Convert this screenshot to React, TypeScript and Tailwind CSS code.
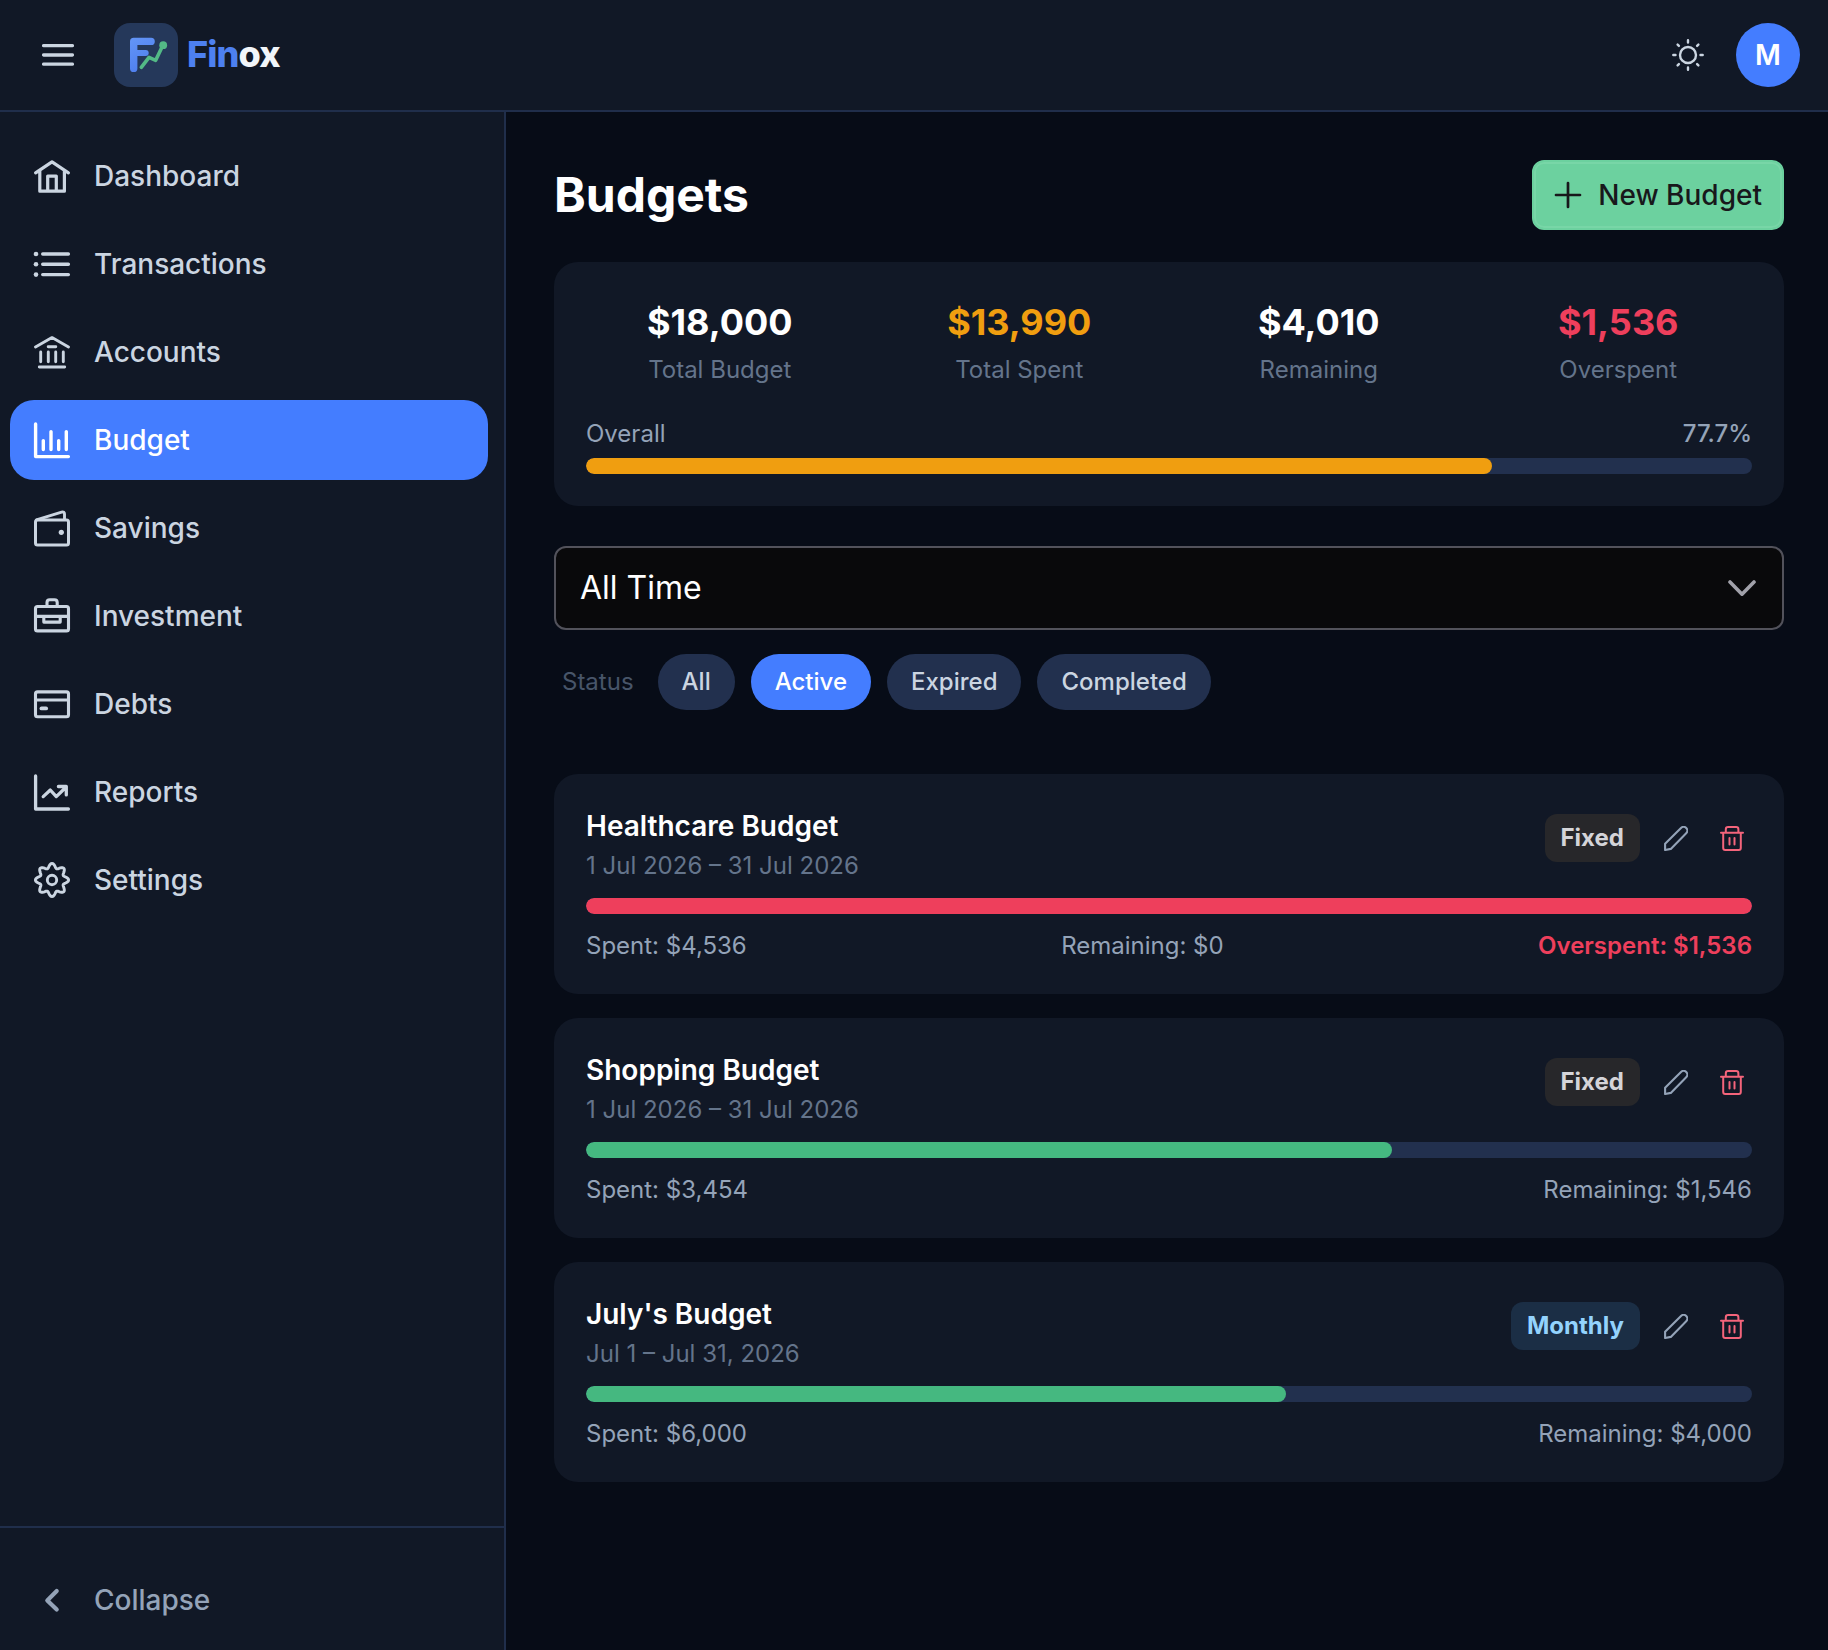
import { useState } from 'react';
import type { ReactNode } from 'react';
import clsx from 'clsx';

type Budget = {
  name: string;
  period: string;
  kind: 'Fixed' | 'Monthly';
  spent: number;
  limit: number;
};

const budgets: Budget[] = [
  { name: 'Healthcare Budget', period: '1 Jul 2026 – 31 Jul 2026', kind: 'Fixed', spent: 4536, limit: 3000 },
  { name: 'Shopping Budget', period: '1 Jul 2026 – 31 Jul 2026', kind: 'Fixed', spent: 3454, limit: 5000 },
  { name: "July's Budget", period: 'Jul 1 – Jul 31, 2026', kind: 'Monthly', spent: 6000, limit: 10000 },
];

const statuses = ['All', 'Active', 'Expired', 'Completed'];

const money = (n: number) => `$${n.toLocaleString('en-US')}`;

// ---------- Icons ----------

// Eight rounded teeth around the centre of a 36px box
const gearPath = 'M' + Array.from({ length: 144 }, (_, i) => {
  const a = (i / 144) * Math.PI * 2;
  const r = 14.35 + 2.25 * Math.cos(8 * a);
  return `${(18 + r * Math.cos(a)).toFixed(2)} ${(18 + r * Math.sin(a)).toFixed(2)}`;
}).join('L') + 'Z';

function NavIcon({ children }: { children: ReactNode }) {
  return (
    <svg viewBox="0 0 36 36" className="size-9 shrink-0 overflow-visible" fill="none" stroke="currentColor"
      strokeWidth={3.2} strokeLinecap="round" strokeLinejoin="round">
      {children}
    </svg>
  );
}

const navItems: { label: string; icon: ReactNode }[] = [
  {
    label: 'Dashboard',
    icon: <path d="M1.6 14.8 18 3.8l16.4 11M5.8 12.4v20.8h24.6V12.4M13.7 33.2V18.1h8.6v15.1" />,
  },
  {
    label: 'Transactions',
    icon: (
      <>
        <path d="M8.7 8h25.7M8.7 18.3h25.7M8.7 28.6h25.7" strokeWidth={3.4} />
        <g fill="currentColor" stroke="none">
          <circle cx="2" cy="8" r="2.3" />
          <circle cx="2" cy="18.3" r="2.3" />
          <circle cx="2" cy="28.6" r="2.3" />
        </g>
      </>
    ),
  },
  {
    label: 'Accounts',
    icon: <path strokeWidth={2.9} d="M1.5 13 18 3.6 34.5 13M14.2 12.7h7.6M6.7 18v9.8M14.3 18v9.8M21.7 18v9.8M29.3 18v9.8M5.3 33h25.4" />,
  },
  {
    label: 'Budget',
    icon: <path strokeWidth={3.4} d="M1.6 2v32.6h32.8M9.3 18.6v9M17 9.6v18M24.7 18.6v9M32.3 9.6v18" />,
  },
  {
    label: 'Savings',
    icon: (
      <>
        <rect x="1.5" y="9.9" width="33" height="25.2" rx="2" strokeWidth={3} />
        <path strokeWidth={2.9} d="M2.4 9.8 27.6 2.1q2.9-.7 2.9 2v5.4" />
        <circle cx="27.3" cy="22.3" r="2.6" fill="currentColor" stroke="none" />
      </>
    ),
  },
  {
    label: 'Investment',
    icon: (
      <>
        <rect x="1.5" y="8.5" width="33" height="24.4" rx="2" strokeWidth={3.1} />
        <path strokeWidth={3.1} d="M13 8.5V4.6q0-2.8 2.8-2.8h4.6q2.8 0 2.8 2.8v3.9M1.5 18.4h33M9.8 18.4v5.7h16.4v-5.7" />
      </>
    ),
  },
  {
    label: 'Debts',
    icon: (
      <>
        <rect x="1.5" y="5.9" width="33" height="24.9" rx="2" strokeWidth={3.1} />
        <path strokeWidth={3.1} d="M1.5 14h33" />
        <path strokeWidth={3.9} d="M7.5 22.4h4.6" />
      </>
    ),
  },
  {
    label: 'Reports',
    icon: <path strokeWidth={3.3} d="M1.6 2v33h32.8M9.2 22.6l7.1-6.6 6 6.6 9.9-9.6M24.4 12.5h7.9v8.4" />,
  },
  {
    label: 'Settings',
    icon: (
      <>
        <path strokeWidth={2.9} d={gearPath} />
        <circle cx="18" cy="18" r="4.7" strokeWidth={2.9} />
      </>
    ),
  },
];

function LogoMark() {
  return (
    <div className="size-16 rounded-2xl bg-[#25385a]">
      <svg viewBox="0 0 64 64" className="size-16" fill="none" strokeLinecap="round" strokeLinejoin="round">
        <defs>
          <linearGradient id="mark" gradientUnits="userSpaceOnUse" x1="16" y1="14" x2="36" y2="50">
            <stop offset="0" stopColor="#6496f6" />
            <stop offset="1" stopColor="#4b7bee" />
          </linearGradient>
        </defs>
        <path d="M19.7 45.4V18.4H37.1" stroke="url(#mark)" strokeWidth={7.4} />
        <path d="M20 30.1h11.7" stroke="url(#mark)" strokeWidth={6} />
        <path d="M27.3 44.3 35 34.3l6.7 3L49 22" stroke="#53b986" strokeWidth={3.6} />
        <circle cx="49.2" cy="22.2" r="3.9" fill="#53b986" />
      </svg>
    </div>
  );
}

function PencilIcon() {
  return (
    <svg viewBox="0 0 24 25" className="h-[25px] w-6" fill="none" stroke="currentColor" strokeWidth={2.1} strokeLinejoin="round">
      <path d="M1.1 24v-6.2L17 1.9a3.7 3.7 0 0 1 5.2 5.3L6.8 22.9Z" />
    </svg>
  );
}

function TrashIcon() {
  return (
    <svg viewBox="0 0 24 25" className="h-[25px] w-6" fill="none" stroke="currentColor" strokeWidth={2} strokeLinecap="round">
      <path d="M1 6.7h22M5.8 6.7V3.4q0-2.3 2.3-2.3h8q2.3 0 2.3 2.3v3.3M3.2 6.7v15.2q0 2 2 2h13.6q2 0 2-2V6.7M9.5 12v6.4M14.5 12v6.4" />
    </svg>
  );
}

// ---------- Layout ----------

function Header() {
  return (
    <header className="flex h-28 items-center justify-between border-b-2 border-[#202e4b] bg-[#111826] pr-7 pl-[42px]">
      <div className="flex items-center">
        <button className="text-[#cbd5e1]">
          <svg viewBox="0 0 32 32" className="size-8" stroke="currentColor" strokeWidth={3.3} strokeLinecap="round">
            <path d="M1.6 6.7h28.8M1.6 16h28.8M1.6 25.2h28.8" />
          </svg>
        </button>
        <div className="ml-10 flex items-center gap-[9px]">
          <LogoMark />
          <span className="pb-0.5 text-4xl font-extrabold tracking-tight text-[#4d80f0]">
            Fin<span className="text-[#f1f5f9]">ox</span>
          </span>
        </div>
      </div>
      <div className="flex items-center gap-8">
        <button className="text-[#cbd5e1]">
          <svg viewBox="0 0 32 32" className="size-8" fill="none" stroke="currentColor" strokeWidth={2.4} strokeLinecap="round">
            <circle cx="16" cy="16" r="8" />
            <path d="M16 1.3v2.2M16 28.5v2.2M1.3 16h2.2M28.5 16h2.2M5.6 5.6l1.3 1.3M25.1 25.1l1.3 1.3M5.6 26.4l1.3-1.3M25.1 6.9l1.3-1.3" />
          </svg>
        </button>
        <div className="flex size-16 items-center justify-center rounded-full bg-[#447dff] text-[28px] font-semibold text-white">M</div>
      </div>
    </header>
  );
}

function Sidebar() {
  return (
    <aside className="flex w-[506px] shrink-0 flex-col border-r-2 border-[#202e4b] bg-[#111826]">
      <nav className="flex flex-1 flex-col gap-2 pt-6 pr-4 pl-2.5">
        {navItems.map(({ label, icon }) => (
          <a key={label}
            className={clsx('flex h-20 items-center gap-6 rounded-3xl px-6 text-[28px] font-medium',
              label === 'Budget' ? 'bg-[#447dff] text-white' : 'text-[#cbd5e1]')}>
            <NavIcon>{icon}</NavIcon>
            {label}
          </a>
        ))}
      </nav>
      <div className="flex h-[124px] items-center border-t-2 border-[#202e4b] pt-[22px] pl-[34px] text-[28px] font-medium text-[#94a3b8]">
        <NavIcon>
          <path strokeWidth={4.2} d="M22.7 9l-9.4 9.4 9.4 9.2" />
        </NavIcon>
        <span className="ml-6">Collapse</span>
      </div>
    </aside>
  );
}

function ProgressBar({ pct, color }: { pct: number; color: string }) {
  return (
    <div className="h-4 overflow-hidden rounded-full bg-[#22304e]">
      <div className={clsx('h-4 rounded-full', color)} style={{ width: `${Math.min(pct, 100).toFixed(1)}%` }} />
    </div>
  );
}

function Stat({ value, label, color }: { value: number; label: string; color: string }) {
  return (
    <div className="text-center">
      <p className={clsx('text-4xl leading-[56px] font-bold', color)}>{money(value)}</p>
      <p className="text-2xl leading-10 text-[#64748b]">{label}</p>
    </div>
  );
}

function BudgetCard({ budget }: { budget: Budget }) {
  const { name, period, kind, spent, limit } = budget;
  const over = spent - limit;
  return (
    <div className="h-[220px] rounded-3xl bg-[#111826] px-8 pt-8">
      <div className="flex justify-between">
        <div>
          <h3 className="text-[28px] leading-10 font-semibold text-white">{name}</h3>
          <p className="text-2xl leading-10 text-[#64748b]">{period}</p>
        </div>
        <div className="flex h-16 items-center">
          <span className={clsx('flex h-12 items-center rounded-xl px-4 text-2xl font-bold',
            kind === 'Fixed' ? 'bg-[#27272a] text-[#d4d4d8]' : 'bg-[#1b2e45] text-[#93d3fd]')}>
            {kind}
          </span>
          <button className="ml-6 text-[#94a3b8]"><PencilIcon /></button>
          <button className="mr-2 ml-8 text-[#f4647b]"><TrashIcon /></button>
        </div>
      </div>
      <div className="mt-3">
        <ProgressBar pct={(spent / limit) * 100} color={over > 0 ? 'bg-[#ee3f5c]' : 'bg-[#45b880]'} />
      </div>
      <div className="mt-3 flex justify-between text-2xl leading-10 text-[#94a3b8]">
        <span>Spent: {money(spent)}</span>
        <span>Remaining: {money(Math.max(-over, 0))}</span>
        {over > 0 && <span className="font-semibold text-[#ee3f5c]">Overspent: {money(over)}</span>}
      </div>
    </div>
  );
}

export default function App() {
  const [status, setStatus] = useState('Active');

  return (
    <div className="flex h-[1650px] flex-col bg-[#070c17] font-[Inter,sans-serif]">
      <Header />
      <div className="flex flex-1">
        <Sidebar />
        <main className="flex-1 pt-12 pr-11 pl-12">
          <div className="flex h-[70px] items-center justify-between">
            <h1 className="text-5xl font-bold text-white">Budgets</h1>
            <button className="flex h-[70px] items-center gap-4 rounded-xl border-2 border-[#6cd19f] bg-[#6cd19f] px-5 text-[28px] font-medium text-[#18181b] inset-ring-2 inset-ring-[#78d6a7]">
              <svg viewBox="0 0 28 28" className="size-7" stroke="currentColor" strokeWidth={2.7} strokeLinecap="round">
                <path d="M2 14h24M14 2v24" />
              </svg>
              New Budget
            </button>
          </div>

          {/* Totals */}
          <section className="mt-8 h-[244px] rounded-3xl bg-[#111826] p-8">
            <div className="grid grid-cols-4 gap-8">
              <Stat value={18000} label="Total Budget" color="text-white" />
              <Stat value={13990} label="Total Spent" color="text-[#f09e10]" />
              <Stat value={4010} label="Remaining" color="text-white" />
              <Stat value={1536} label="Overspent" color="text-[#ee3f5c]" />
            </div>
            <div className="mt-6 mb-1 flex justify-between text-2xl leading-10 text-[#94a3b8]">
              <span>Overall</span>
              <span className="font-medium">77.7%</span>
            </div>
            <ProgressBar pct={77.7} color="bg-[#f09e10]" />
          </section>

          {/* Filters */}
          <div className="mt-10 flex h-[84px] items-center justify-between rounded-xl border-2 border-[#52525b] bg-[#09090b] pr-[26px] pl-6 text-[32px] text-white">
            All Time
            <svg viewBox="0 0 28 28" className="size-7" fill="none" stroke="#a1a1aa" strokeWidth={3.6} strokeLinecap="round" strokeLinejoin="round">
              <path d="M2 8l12 12.2L26 8" />
            </svg>
          </div>
          <div className="mt-6 flex items-center gap-4 pl-2 text-2xl">
            <span className="mr-2 text-[#475569]">Status</span>
            {statuses.map(s => (
              <button key={s} onClick={() => setStatus(s)}
                className={clsx('h-14 rounded-full px-6 font-medium',
                  s === status ? 'bg-[#447dff] text-white' : 'bg-[#22304e] text-[#cbd5e1]')}>
                {s}
              </button>
            ))}
          </div>

          <div className="mt-16 flex flex-col gap-6">
            {budgets.map(b => <BudgetCard key={b.name} budget={b} />)}
          </div>
        </main>
      </div>
    </div>
  );
}
